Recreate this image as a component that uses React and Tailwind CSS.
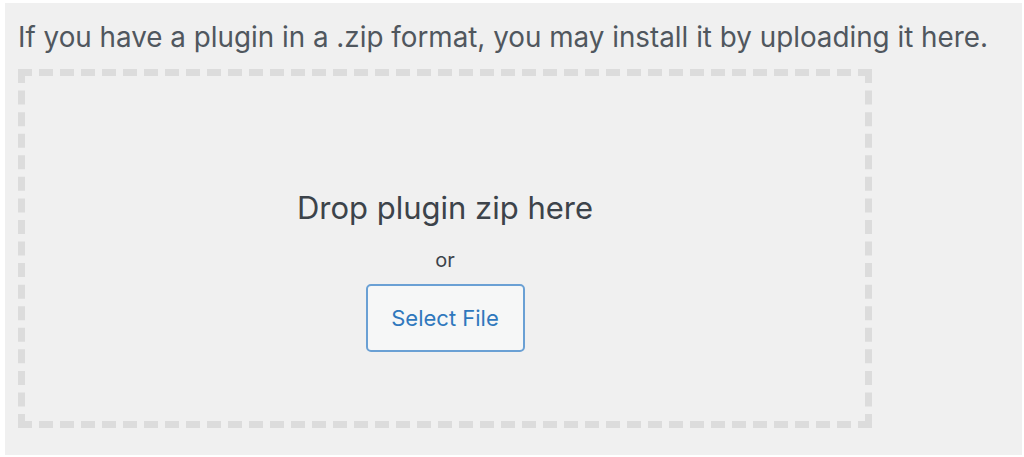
import React from 'react';

const font = { fontFamily: 'Inter, "Liberation Sans", sans-serif' };

function App() {
  return (
    <div className="min-h-screen bg-white pl-[5px] pt-[3px] pr-[2px]" style={font}>
      <div className="bg-[#f0f0f0] h-[452px] pl-[13px] pt-[14px]">
        <p className="text-[27.8px] leading-[40px] text-[#50575e] whitespace-nowrap">
          If you have a plugin in a .zip format, you may install it by uploading it here.
        </p>
        <div className="mt-[12px] w-[854px] h-[359px] border-[7px] border-dashed border-[#dcdcdc] flex flex-col items-center pt-[112px]">
          <p className="text-[31px] leading-[40px] text-[#3c434a]">Drop plugin zip here</p>
          <p className="mt-[20px] text-[20px] leading-[24px] text-[#3c434a]">or</p>
          <button className="mt-[12px] w-[159px] h-[68px] rounded-[5px] border-2 border-[#6aa0d4] bg-[#f6f7f7] text-[22px] text-[#2f78bd]">
            Select File
          </button>
        </div>
      </div>
    </div>
  );
}

export default App;
